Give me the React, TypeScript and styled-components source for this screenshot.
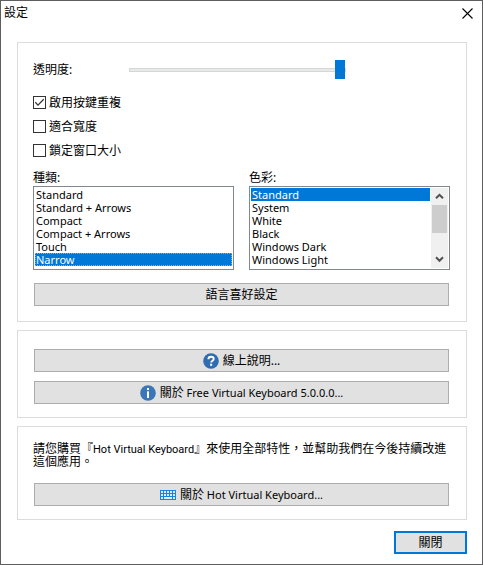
import React, { useState } from 'react';
import styled, { createGlobalStyle } from 'styled-components';

const GlobalStyle = createGlobalStyle`
  * { box-sizing: border-box; }
  body {
    margin: 0;
    background: #fff;
    color: #000;
    font-family: "Noto Sans", "Noto Sans CJK TC", sans-serif;
    font-size: 12px;
  }
  button, select, input { font: inherit; color: inherit; margin: 0; }
`;

const Dialog = styled.div`
  display: flex;
  flex-direction: column;
  min-height: 100vh;
  background: #fff;
  border: 1px solid #5e5e60;
`;

const TitleBar = styled.header`
  display: flex;
  align-items: flex-start;
  justify-content: space-between;
  height: 41px;
  padding-left: 3px;
`;

const Title = styled.h1`
  margin: 0;
  font-size: 12px;
  font-weight: 400;
  line-height: 24px;
`;

const CloseIconButton = styled.button`
  display: flex;
  align-items: center;
  justify-content: center;
  width: 30px;
  height: 24px;
  padding: 0;
  border: 0;
  background: transparent;
`;

const Content = styled.main`
  display: flex;
  flex-direction: column;
  gap: 8px;
  padding: 0 15px 0 16px;
`;

const Group = styled.section<{ $top: number; $bottom: number }>`
  display: flex;
  flex-direction: column;
  border: 1px solid #dcdcdc;
  padding: ${(p) => p.$top}px 16px ${(p) => p.$bottom}px 15px;
`;

const SliderRow = styled.div`
  display: flex;
  align-items: center;
  height: 19px;
  padding-right: 104px;
`;

const SliderLabel = styled.label`
  flex: 0 0 96px;
  line-height: 19px;
`;

const Slider = styled.input`
  appearance: none;
  flex: 1;
  min-width: 0;
  height: 19px;
  background: transparent;
  &::-webkit-slider-runnable-track {
    height: 4px;
    border: 1px solid #d6d6d6;
    background: #e7eaea;
  }
  &::-webkit-slider-thumb {
    appearance: none;
    width: 10px;
    height: 19px;
    margin-top: -9px;
    background: #0078d7;
  }
`;

const Checks = styled.div`
  display: flex;
  flex-direction: column;
  align-items: flex-start;
  gap: 11px;
  margin: 17px 0 13px;
`;

const CheckLabel = styled.label`
  display: flex;
  align-items: center;
  gap: 3px;
  height: 13px;
  line-height: 13px;
`;

const CheckBoxFrame = styled.span`
  display: grid;
  width: 13px;
  height: 13px;
  & > * { grid-area: 1 / 1; }
  & > svg { pointer-events: none; visibility: hidden; }
  & > input:checked + svg { visibility: visible; }
`;

const CheckInput = styled.input`
  appearance: none;
  width: 13px;
  height: 13px;
  border: 1px solid #333;
  background: #fff;
`;

const Lists = styled.div`
  display: grid;
  grid-template-columns: 1fr 1fr;
  gap: 15px;
  margin-bottom: 13px;
`;

const ListField = styled.div`
  display: flex;
  flex-direction: column;
  min-width: 0;
`;

const ListLabel = styled.label`
  height: 16px;
  line-height: 15px;
`;

const ListFrame = styled.div`
  display: flex;
  height: 84px;
  padding: 1px;
  border: 1px solid #828790;
  background: #fff;
`;

const ListBox = styled.select`
  flex: 1;
  min-width: 0;
  height: 80px;
  padding: 0;
  border: 0;
  outline: 0;
  border-radius: 0;
  background: #fff;
  font-size: 11px;
  scrollbar-width: none;
`;

const ListOption = styled.option<{ $dotted?: boolean }>`
  display: flex;
  align-items: center;
  height: 13px;
  min-height: 13px;
  padding: 0 1px;
  &:checked {
    background: linear-gradient(#0078d7, #0078d7);
    color: #fff;
    -webkit-text-fill-color: #fff;
    outline: ${(p) => (p.$dotted ? '1px dotted #e89a4c' : '0')};
    outline-offset: -1px;
  }
`;

const ScrollBar = styled.div`
  display: flex;
  flex-direction: column;
  width: 17px;
  margin-left: 1px;
  background: #f0f0f0;
`;

const ScrollButton = styled.button`
  display: flex;
  align-items: center;
  justify-content: center;
  width: 17px;
  height: 17px;
  padding: 0;
  border: 0;
  background: transparent;
`;

const ScrollTrack = styled.div`
  flex: 1;
  padding: 0 1px;
`;

const ScrollThumb = styled.div`
  height: 28px;
  background: #cdcdcd;
`;

const PushButton = styled.button<{ $primary?: boolean }>`
  display: flex;
  align-items: center;
  justify-content: center;
  gap: 4px;
  height: 23px;
  margin: 0 1px;
  padding: 0;
  border: ${(p) => (p.$primary ? '2px solid #0078d7' : '1px solid #adadad')};
  border-radius: 0;
  background: #e1e1e1;
  line-height: 18px;
  white-space: pre;
`;

const ButtonStack = styled.div`
  display: flex;
  flex-direction: column;
  gap: 9px;
`;

const Latin = styled.span`
  font-size: 11px;
`;

const Note = styled.p`
  margin: 0 0 15px;
  line-height: 13px;
`;

const ProductName = styled.span`
  font-family: Roboto, "Noto Sans", sans-serif;
  font-size: 11px;
  line-height: 1;
`;

const Footer = styled.footer`
  display: flex;
  justify-content: flex-end;
  padding: 11px 14px 10px;
  & > button { width: 73px; }
`;

function Arrow({ down }: { down?: boolean }) {
  return (
    <svg width="9" height="7" viewBox="0 0 9 7" aria-hidden="true">
      <path
        d={down ? 'M1 1.3 4.5 4.8 8 1.3' : 'M1 5.3 4.5 1.8 8 5.3'}
        fill="none"
        stroke="#505050"
        strokeWidth="2"
      />
    </svg>
  );
}

function HelpIcon() {
  return (
    <svg width="16" height="16" viewBox="0 0 16 16" aria-hidden="true">
      <circle cx="8" cy="8" r="7.8" fill="#2f6db3" />
      <path
        d="M5.4 6.2C5.4 4.4 6.5 3.7 8 3.7s2.7.8 2.7 2.2c0 1.8-2.5 1.8-2.5 3.7"
        fill="none"
        stroke="#fff"
        strokeWidth="1.9"
      />
      <rect x="7.1" y="10.7" width="2.1" height="2.1" fill="#fff" />
    </svg>
  );
}

function InfoIcon() {
  return (
    <svg width="16" height="16" viewBox="0 0 16 16" aria-hidden="true">
      <circle cx="8" cy="8" r="7.8" fill="#3a76b8" />
      <rect x="7" y="3" width="2" height="2" fill="#fff" />
      <rect x="7" y="6.3" width="2" height="6.7" fill="#fff" />
    </svg>
  );
}

function KeyboardIcon() {
  const keys: React.ReactNode[] = [];
  for (let row = 0; row < 2; row += 1) {
    for (let col = 0; col < 5; col += 1) {
      keys.push(<rect key={`${row}-${col}`} x={1 + col * 3} y={1 + row * 3} width="2" height="2" />);
    }
  }
  return (
    <svg width="16" height="10" viewBox="0 0 16 10" aria-hidden="true">
      <rect width="16" height="10" fill="#1784e0" />
      <g fill="#d9efff">
        {keys}
        <rect x="1" y="7" width="2" height="2" />
        <rect x="4" y="7" width="8" height="2" />
        <rect x="13" y="7" width="2" height="2" />
      </g>
    </svg>
  );
}

function CheckBox({ text, initial = false }: { text: string; initial?: boolean }) {
  const [checked, setChecked] = useState(initial);
  return (
    <CheckLabel>
      <CheckBoxFrame>
        <CheckInput type="checkbox" checked={checked} onChange={(e) => setChecked(e.target.checked)} />
        <svg width="13" height="13" viewBox="0 0 13 13" aria-hidden="true">
          <path d="M2.3 6.3 5 9.1 10.7 3.3" fill="none" stroke="#333" strokeWidth="1.3" />
        </svg>
      </CheckBoxFrame>
      {text}
    </CheckLabel>
  );
}

const kinds = ['Standard', 'Standard + Arrows', 'Compact', 'Compact + Arrows', 'Touch', 'Narrow'];
const colours = ['Standard', 'System', 'White', 'Black', 'Windows Dark', 'Windows Light'];

export default function App() {
  const [opacity, setOpacity] = useState(100);
  const [kind, setKind] = useState('Narrow');
  const [colour, setColour] = useState('Standard');

  return (
    <>
      <GlobalStyle />
      <Dialog role="dialog" aria-labelledby="title" lang="zh-Hant">
        <TitleBar>
          <Title id="title">設定</Title>
          <CloseIconButton aria-label="關閉">
            <svg width="11" height="11" viewBox="0 0 11 11" aria-hidden="true">
              <path d="M.5.5l10 10M10.5.5l-10 10" stroke="#000" strokeWidth="1.1" />
            </svg>
          </CloseIconButton>
        </TitleBar>
        <Content>
          <Group $top={17} $bottom={15}>
            <SliderRow>
              <SliderLabel htmlFor="opacity">透明度:</SliderLabel>
              <Slider
                id="opacity"
                type="range"
                min={0}
                max={100}
                value={opacity}
                onChange={(e) => setOpacity(Number(e.target.value))}
              />
            </SliderRow>
            <Checks>
              <CheckBox text="啟用按鍵重複" initial />
              <CheckBox text="適合寬度" />
              <CheckBox text="鎖定窗口大小" />
            </Checks>
            <Lists>
              <ListField>
                <ListLabel htmlFor="kind">種類:</ListLabel>
                <ListFrame>
                  <ListBox id="kind" size={6} value={kind} onChange={(e) => setKind(e.target.value)}>
                    {kinds.map((name) => (
                      <ListOption key={name} value={name} $dotted>{name}</ListOption>
                    ))}
                  </ListBox>
                </ListFrame>
              </ListField>
              <ListField>
                <ListLabel htmlFor="colour">色彩:</ListLabel>
                <ListFrame>
                  <ListBox id="colour" size={6} value={colour} onChange={(e) => setColour(e.target.value)}>
                    {colours.map((name) => (
                      <ListOption key={name} value={name}>{name}</ListOption>
                    ))}
                  </ListBox>
                  <ScrollBar>
                    <ScrollButton aria-label="向上"><Arrow /></ScrollButton>
                    <ScrollTrack><ScrollThumb /></ScrollTrack>
                    <ScrollButton aria-label="向下"><Arrow down /></ScrollButton>
                  </ScrollBar>
                </ListFrame>
              </ListField>
            </Lists>
            <PushButton>語言喜好設定</PushButton>
          </Group>
          <Group $top={18} $bottom={13}>
            <ButtonStack>
              <PushButton><HelpIcon /><span>線上說明...</span></PushButton>
              <PushButton>
                <InfoIcon />
                <span>關於<Latin> Free Virtual Keyboard 5.0.0.0...</Latin></span>
              </PushButton>
            </ButtonStack>
          </Group>
          <Group $top={15} $bottom={13}>
            <Note>
              請您購買『<ProductName>Hot Virtual Keyboard</ProductName>』來使用全部特性，並幫助我們在今後持續改進這個應用。
            </Note>
            <PushButton>
              <KeyboardIcon />
              <span>關於<Latin> Hot Virtual Keyboard...</Latin></span>
            </PushButton>
          </Group>
        </Content>
        <Footer>
          <PushButton $primary>關閉</PushButton>
        </Footer>
      </Dialog>
    </>
  );
}
